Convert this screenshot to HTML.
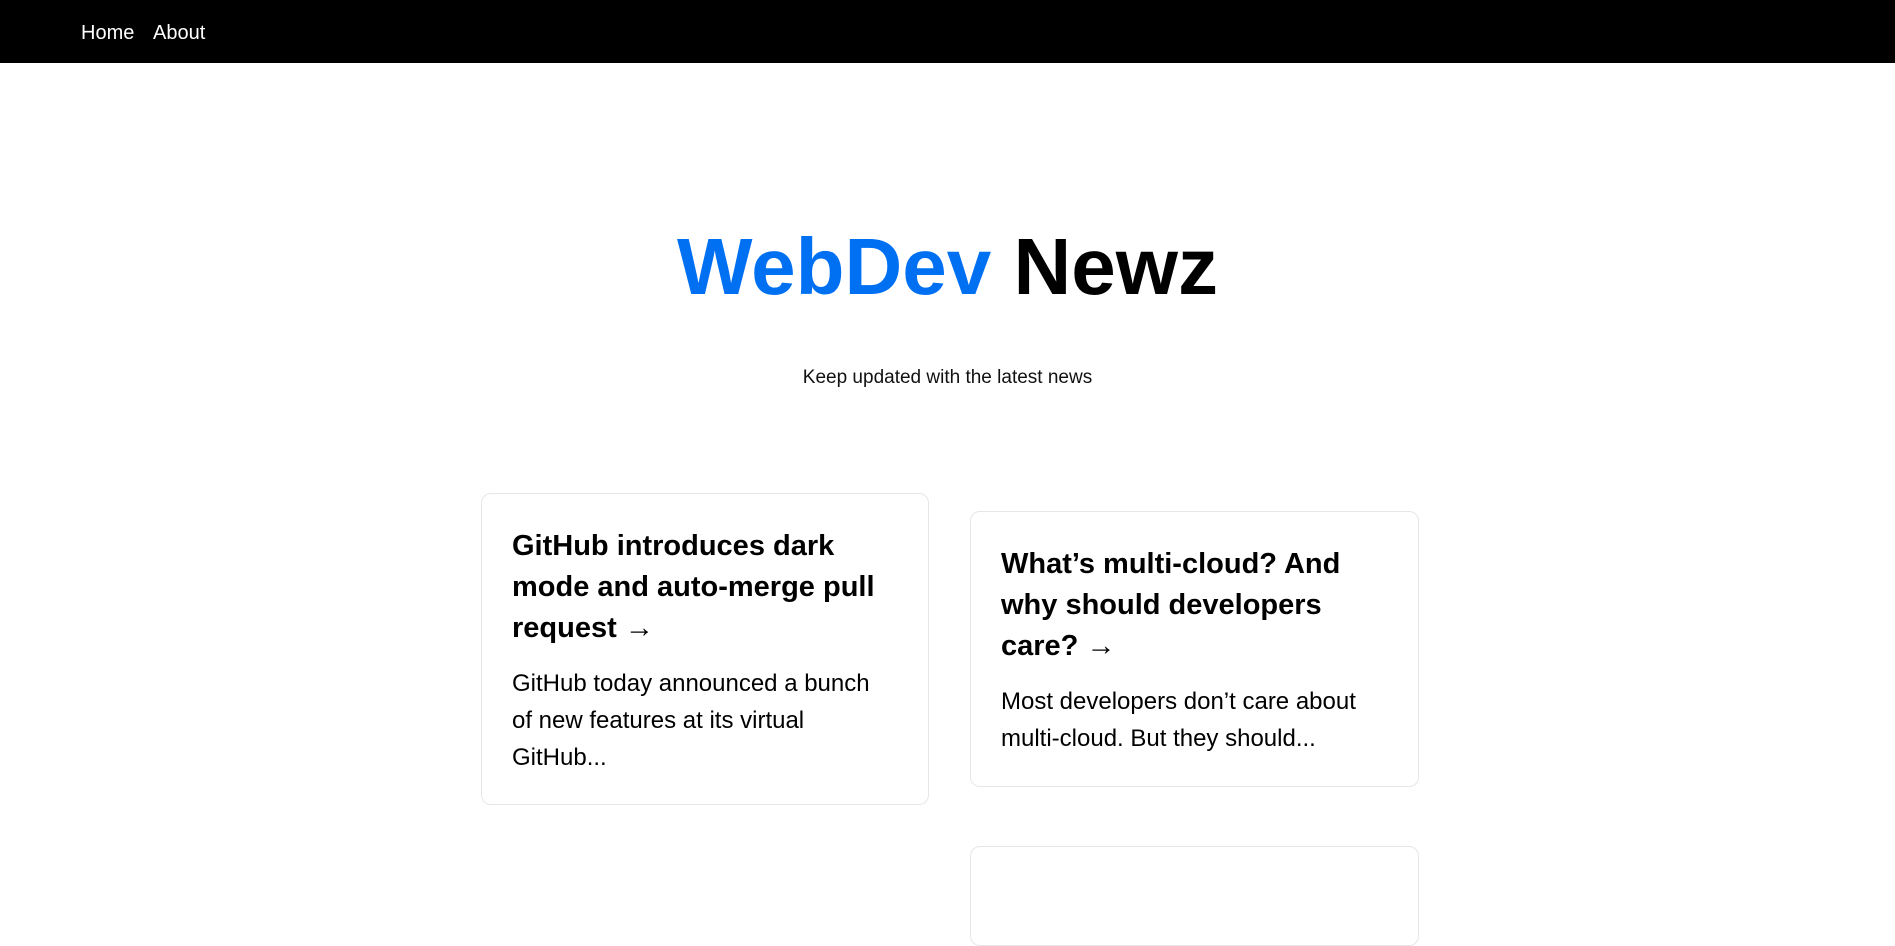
<!DOCTYPE html>
<html><head><meta charset="utf-8"><style>
*{margin:0;padding:0;box-sizing:border-box}
body{width:1895px;height:860px;overflow:hidden;background:#fff;font-family:"Liberation Sans",sans-serif;color:#000;position:relative}
nav{position:absolute;left:0;top:0;width:1895px;height:63px;background:#000}
nav a{position:absolute;top:22px;color:#fff;font-size:20px;text-decoration:none;line-height:22px}
h1{position:absolute;left:0;width:1895px;top:221px;text-align:center;font-size:80px;line-height:92px;font-weight:bold}
h1 span{color:#0070f3}
.sub{position:absolute;left:0;width:1895px;top:366px;text-align:center;font-size:19px;line-height:24px;color:#111}
.card{position:absolute;border:1px solid #e6e6e6;border-radius:10px;padding:32px 30px;background:#fff}
.card h2{font-size:29px;line-height:41px;font-weight:bold;margin-bottom:16px;white-space:nowrap}
.card p{font-size:24px;line-height:37px;white-space:nowrap}
</style></head><body>
<nav><a style="left:81px">Home</a><a style="left:153px">About</a></nav>
<h1><span>WebDev</span> Newz</h1>
<div class="sub">Keep updated with the latest news</div>
<div class="card" style="left:481px;top:493px;width:448px;height:312px">
<h2>GitHub introduces dark<br>mode and auto-merge pull<br>request →</h2>
<p>GitHub today announced a bunch<br>of new features at its virtual<br>GitHub...</p>
</div>
<div class="card" style="left:970px;top:511px;width:449px;height:276px">
<h2>What’s multi-cloud? And<br>why should developers<br>care? →</h2>
<p>Most developers don’t care about<br>multi-cloud. But they should...</p>
</div>
<div class="card" style="left:970px;top:846px;width:449px;height:100px"></div>
</body></html>
